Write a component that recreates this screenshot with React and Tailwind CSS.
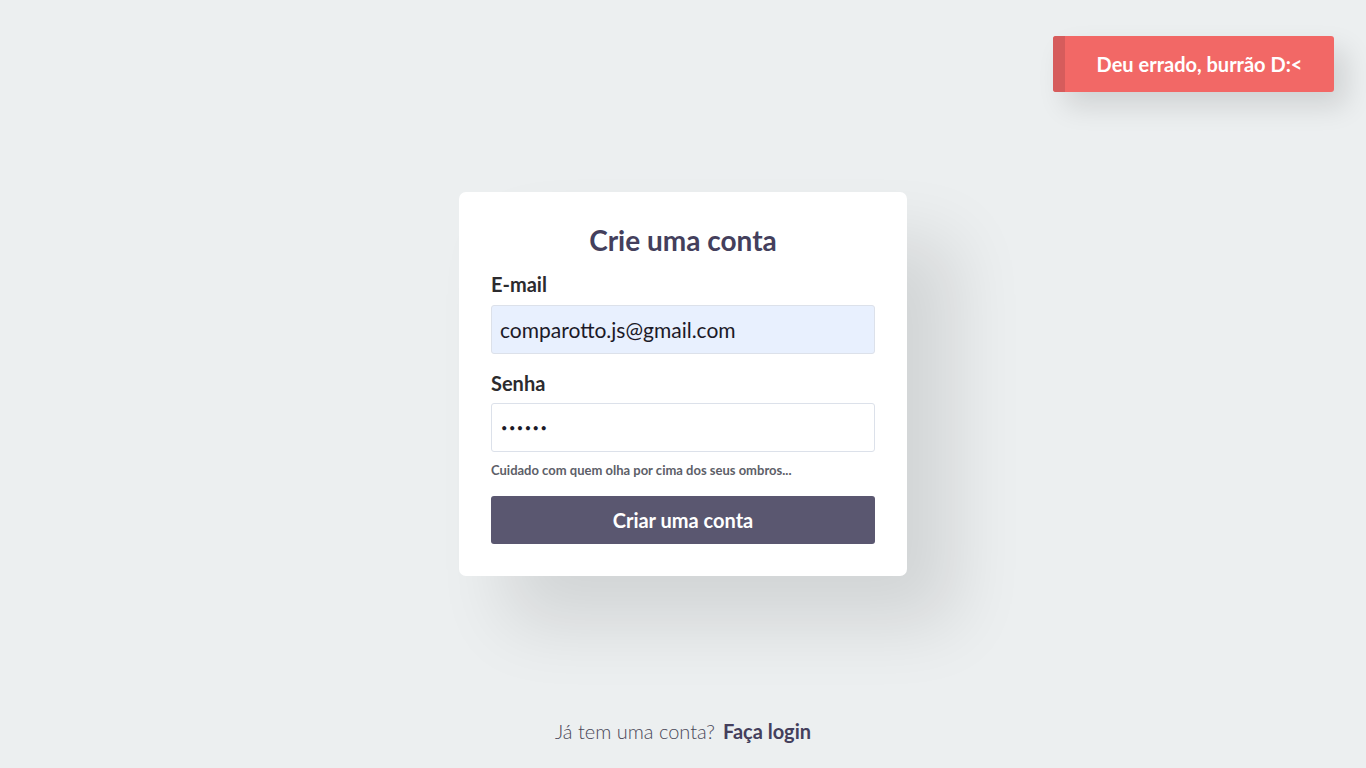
export default function App() {
  const font = { fontFamily: '"Lato", "Open Sans", sans-serif' };
  return (
    <div className="relative min-h-[768px] w-full bg-[#eceff0] flex flex-col items-center" style={font}>
      <div className="absolute right-[32px] top-[36px] w-[281px] h-[56px] rounded-[3px] bg-[#f26866] flex overflow-hidden shadow-[12px_14px_28px_rgba(0,0,0,0.12)]">
        <div className="w-[12px] bg-[#d65c5c]" />
        <div className="flex-1 flex items-center justify-center text-white font-bold text-[20px]">Deu errado, burrão D:&lt;</div>
      </div>
      <div className="mt-[192px] w-[448px] bg-white rounded-[7px] px-[32px] pt-[30px] pb-[32px] shadow-[48px_48px_70px_rgba(0,0,0,0.11)]">
        <h1 className="text-center text-[28px] font-bold text-[#443f5c] leading-[36px]">Crie uma conta</h1>
        <label className="block mt-[14px] text-[20px] font-bold text-[#2c2b2e] leading-[24px]">E-mail</label>
        <div className="mt-[9px] h-[49px] rounded-[3px] border border-[#dce1ea] bg-[#e8f0fe] flex items-center px-[8px] text-[21px] text-[#1c1a28]">comparotto.js@gmail.com</div>
        <label className="block mt-[17px] text-[20px] font-bold text-[#2c2b2e] leading-[24px]">Senha</label>
        <div className="mt-[8px] h-[49px] rounded-[3px] border border-[#dce1ea] bg-white flex items-center px-[9px] text-[#1c1a28]">
          <span className="text-[11px] tracking-[1.5px] leading-none">••••••</span>
        </div>
        <p className="mt-[10px] text-[13px] font-bold text-[#5d6068] leading-[16px]">Cuidado com quem olha por cima dos seus ombros...</p>
        <button className="mt-[18px] w-full h-[48px] rounded-[3px] bg-[#5a5770] text-white font-bold text-[20px]">Criar uma conta</button>
      </div>
      <div className="mt-[140px] text-[20px] text-[#4a4858] font-light flex items-center gap-[8px]">
        <span>Já tem uma conta?</span>
        <span className="font-bold text-[#443f5c]">Faça login</span>
      </div>
    </div>
  );
}
